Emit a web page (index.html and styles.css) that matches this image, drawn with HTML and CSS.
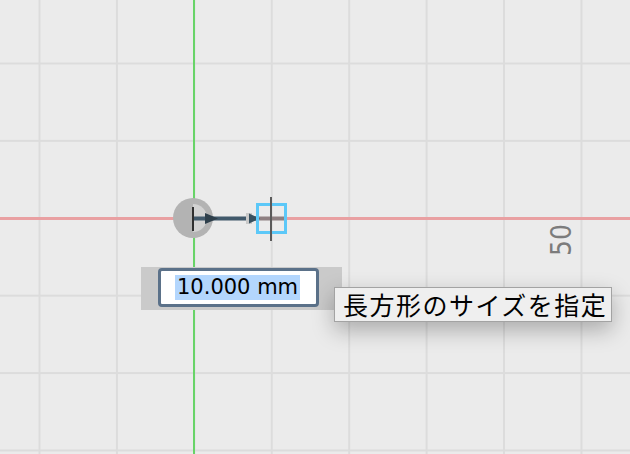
FILE: index.html
```html
<!DOCTYPE html>
<html lang="ja">
<head>
<meta charset="utf-8">
<title>Sketch</title>
<link rel="stylesheet" href="styles.css">
</head>
<body>
<div class="viewport">
  <div class="axis-y"></div>
  <div class="axis-x"></div>
  <svg class="gizmo" width="140" height="60" viewBox="0 0 140 60">
    <circle cx="33" cy="28" r="20" fill="#b3b3b3"/>
    <path d="M33 14 A14 14 0 0 1 33 42 Z" fill="#d2d2d2"/>
    <line x1="33" y1="28.5" x2="98" y2="28.5" stroke="#41596b" stroke-width="4"/>
    <line x1="98" y1="28.5" x2="127" y2="28.5" stroke="#8e8082" stroke-width="4"/>
    <polygon points="45,23 58,28.5 45,34" fill="#2e3f4b"/>
    <rect x="86" y="23" width="6" height="11" fill="#c9c9c9"/>
    <polygon points="89,23.5 100,28.5 89,33.5" fill="#38505f"/>
    <rect x="32" y="17" width="2" height="24" fill="#2f2f2f"/>
    <rect x="97.5" y="14.5" width="28" height="28" fill="none" stroke="#5cc8f8" stroke-width="3"/>
    <rect x="110" y="7" width="2" height="44" fill="#5a5a5a"/>
  </svg>
  <div class="label-50">50</div>
  <div class="dim-panel">
    <div class="dim-input"><span class="dim-value">10.000 mm</span></div>
  </div>
  <div class="tooltip">長方形のサイズを指定</div>
</div>
</body>
</html>
```
FILE: styles.css
```css
html, body {
  margin: 0;
  padding: 0;
}
body {
  width: 630px;
  height: 454px;
  overflow: hidden;
  background: #ebebeb;
}
.viewport {
  position: relative;
  width: 630px;
  height: 454px;
  overflow: hidden;
  background-color: #ebebeb;
  background-image:
    linear-gradient(to right, #dcdcdc 0, #dcdcdc 2px, rgba(235,235,235,0) 2px),
    linear-gradient(to bottom, #dcdcdc 0, #dcdcdc 2px, rgba(235,235,235,0) 2px);
  background-size: 77.43px 77.4px;
  background-position: 38.5px 62.5px;
}
.axis-y {
  position: absolute;
  left: 193px;
  top: 0;
  width: 2px;
  height: 454px;
  background: #68d468;
}
.axis-x {
  position: absolute;
  left: 0;
  top: 217px;
  width: 630px;
  height: 3px;
  background: #e9a0a2;
}
.gizmo {
  position: absolute;
  left: 160px;
  top: 190px;
}
.label-50 {
  position: absolute;
  left: 543px;
  top: 226px;
  width: 38px;
  height: 28px;
  font-family: "DejaVu Sans Condensed", "DejaVu Sans", sans-serif;
  font-size: 28px;
  line-height: 28px;
  color: #7c7c7c;
  text-align: center;
  transform: rotate(-90deg);
}
.dim-panel {
  position: absolute;
  left: 141px;
  top: 267px;
  width: 201px;
  height: 43px;
  background: #cacaca;
  box-sizing: border-box;
  padding: 1px 0 0 17px;
}
.dim-input {
  width: 161px;
  height: 39px;
  box-sizing: border-box;
  border: 3px solid #5b7189;
  border-radius: 4px;
  background: #ffffff;
  padding: 4px 0 0 14px;
}
.dim-value {
  display: inline-block;
  height: 25px;
  line-height: 25px;
  padding: 0 2px;
  background: #b3d6fd;
  font-family: "DejaVu Sans", sans-serif;
  font-size: 21px;
  color: #000;
}
.tooltip {
  position: absolute;
  left: 334px;
  top: 287px;
  width: 278px;
  height: 35px;
  box-sizing: border-box;
  border: 1px solid #a3a3a3;
  background: #efefef;
  box-shadow: 0 8px 22px rgba(0,0,0,0.28);
  padding-left: 8px;
  font-family: "Noto Sans CJK JP", sans-serif;
  font-size: 25px;
  letter-spacing: 1.5px;
  line-height: 32px;
  color: #000;
  white-space: nowrap;
}
```
